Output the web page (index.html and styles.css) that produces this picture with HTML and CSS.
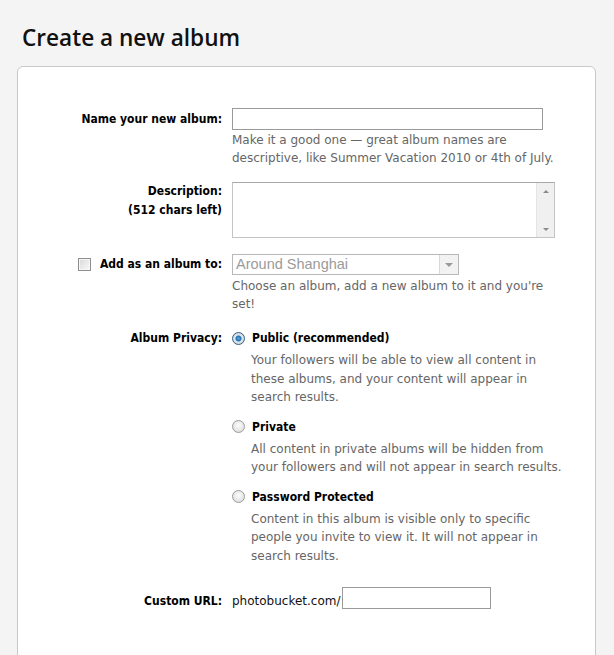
FILE: index.html
```html
<!DOCTYPE html>
<html lang="en">
<head>
    <meta charset="UTF-8">
    <title>Create a new album</title>
    <link rel="stylesheet" href="styles.css">
</head>
<body>

<h1 class="page-title">Create a new album</h1>

<div class="card">
    <form class="album-form">
        <!-- Nombre -->
        <label class="form-label name-label" for="albumName">Name your new album:</label>
        <div class="form-field">
            <input type="text" id="albumName" class="text-input name-input">
            <p class="help">Make it a good one — great album names are descriptive, like Summer Vacation 2010 or 4th of July.</p>
        </div>

        <!-- Descripcion -->
        <label class="form-label desc-label" for="albumDesc">Description:<br>(512 chars left)</label>
        <div class="form-field desc-field">
            <div class="textarea-box">
                <textarea id="albumDesc"></textarea>
                <div class="fake-scroll">
                    <span class="arrow up"></span>
                    <span class="arrow down"></span>
                </div>
            </div>
        </div>

        <!-- Sub album -->
        <label class="form-label check-label"><input type="checkbox" class="check"> Add as an album to:</label>
        <div class="form-field parent-field">
            <div class="select-box">
                <span class="select-text">Around Shanghai</span>
                <span class="select-btn"><span class="arrow down"></span></span>
            </div>
            <p class="help">Choose an album, add a new album to it and you're set!</p>
        </div>

        <!-- Privacidad -->
        <div class="form-label privacy-label">Album Privacy:</div>
        <div class="form-field options">
            <div class="option">
                <label class="option-title"><input type="radio" name="privacy" class="radio" checked> Public (recommended)</label>
                <p class="help option-help">Your followers will be able to view all content in these albums, and your content will appear in search results.</p>
            </div>
            <div class="option">
                <label class="option-title"><input type="radio" name="privacy" class="radio"> Private</label>
                <p class="help option-help">All content in private albums will be hidden from your followers and will not appear in search results.</p>
            </div>
            <div class="option">
                <label class="option-title"><input type="radio" name="privacy" class="radio"> Password Protected</label>
                <p class="help option-help">Content in this album is visible only to specific people you invite to view it. It will not appear in search results.</p>
            </div>
        </div>

        <!-- URL -->
        <label class="form-label url-label" for="customUrl">Custom URL:</label>
        <div class="form-field url-field">
            <span class="url-prefix">photobucket.com/</span>
            <input type="text" id="customUrl" class="text-input url-input">
        </div>
    </form>
</div>

</body>
</html>
```

FILE: styles.css
```css
body {
    margin: 0;
    background-color: #f4f4f4;
    font-family: "DejaVu Sans", Verdana, sans-serif;
    font-size: 12px;
    color: #000;
}

.page-title {
    margin: 0;
    padding: 24px 0 0 22px;
    height: 42px;
    box-sizing: border-box;
    font-family: "Open Sans", sans-serif;
    font-weight: 600;
    font-size: 22.6px;
    line-height: 28px;
    color: #111;
}

/* Tarjeta blanca */
.card {
    margin: 24px 0 0 17px;
    width: 579px;
    height: 620px;
    box-sizing: border-box;
    background: #fff;
    border: 1px solid #c9c9c9;
    border-radius: 6px;
    padding-top: 41px;
}

.album-form {
    display: grid;
    grid-template-columns: 204px 1fr;
    column-gap: 10px;
    align-items: start;
}

.form-label {
    font-family: "DejaVu Sans Condensed", "DejaVu Sans", sans-serif;
    font-weight: bold;
    font-size: 12px;
    text-align: right;
    line-height: 18px;
}

.help {
    margin: 0;
    color: #666;
    line-height: 18px;
    width: 326px;
}

.text-input {
    display: block;
    box-sizing: border-box;
    border: 1px solid #9a9a9a;
    background: #fff;
    margin: 0;
    padding: 0 3px;
    font: inherit;
}

.name-label {
    padding-top: 2px;
}

.name-input {
    width: 311px;
    height: 22px;
    margin-bottom: 1px;
}

/* Descripcion */
.desc-label {
    margin-top: 15px;
    line-height: 19px;
}

.desc-field {
    margin-top: 15px;
}

.textarea-box {
    display: flex;
    width: 323px;
    height: 56px;
    box-sizing: border-box;
    border: 1px solid #c4c4c4;
    border-top-color: #a8a8a8;
}

.textarea-box textarea {
    flex: 1;
    border: 0;
    resize: none;
    outline: none;
    margin: 0;
    padding: 2px;
}

.fake-scroll {
    width: 17px;
    background: #f0f0f0;
    border-left: 1px solid #e4e4e4;
    display: flex;
    flex-direction: column;
    justify-content: space-between;
    align-items: center;
    padding: 7px 0 6px;
}

.arrow {
    width: 0;
    height: 0;
    border-left: 3px solid transparent;
    border-right: 3px solid transparent;
}

.arrow.up {
    border-bottom: 3px solid #8a8a8a;
}

.arrow.down {
    border-top: 3px solid #8a8a8a;
}

/* Album padre */
.check-label {
    margin-top: 16px;
    display: flex;
    justify-content: flex-end;
    align-items: center;
    gap: 9px;
    height: 20px;
}

.parent-field {
    margin-top: 16px;
}

.check {
    appearance: none;
    margin: 0;
    width: 13px;
    height: 13px;
    border: 1px solid #8f8f8f;
    background: linear-gradient(135deg, #d8d8d8, #fafafa);
    box-shadow: inset 0 0 0 1px #f6f6f6;
    box-sizing: border-box;
}

.select-box {
    display: flex;
    width: 227px;
    height: 21px;
    box-sizing: border-box;
    border: 1px solid #b8b8b8;
    margin-bottom: 2px;
}

.select-text {
    flex: 1;
    font-family: "Liberation Sans", Arial, sans-serif;
    font-size: 14.5px;
    line-height: 19px;
    color: #9b9b9b;
    padding-left: 3px;
}

.select-btn {
    width: 18px;
    background: #f2f2f2;
    border-left: 1px solid #d8d8d8;
    display: flex;
    align-items: center;
    justify-content: center;
}

.select-btn .arrow.down {
    border-left-width: 4px;
    border-right-width: 4px;
    border-top-width: 4px;
    border-top-color: #9a9a9a;
}

/* Privacidad */
.privacy-label {
    margin-top: 16px;
}

.options {
    margin-top: 16px;
    display: flex;
    flex-direction: column;
    gap: 11px;
}

.option-title {
    display: flex;
    align-items: center;
    gap: 7px;
    font-family: "DejaVu Sans Condensed", "DejaVu Sans", sans-serif;
    font-weight: bold;
    line-height: 18px;
}

.option-help {
    margin-top: 4px;
    padding-left: 19px;
    width: 318px;
    line-height: 18.5px;
}

.radio {
    appearance: none;
    margin: 0;
    width: 13px;
    height: 13px;
    border-radius: 50%;
    border: 1px solid #9c9c9c;
    background: radial-gradient(circle at 50% 40%, #fdfdfd, #d6d6d6);
    box-sizing: border-box;
}

.radio:checked {
    border-color: #3a5f80;
    background: radial-gradient(circle, #5aa8e0 0, #1f6fb0 2.5px, #dfe8f0 3.5px, #c8d4de 6px);
}

/* URL */
.url-label {
    margin-top: 22px;
    padding-top: 5px;
    line-height: 18px;
}

.url-field {
    margin-top: 22px;
    display: flex;
    align-items: flex-end;
    gap: 1px;
}

.url-prefix {
    color: #111;
    line-height: 16px;
}

.url-input {
    width: 149px;
    height: 22px;
}
```
